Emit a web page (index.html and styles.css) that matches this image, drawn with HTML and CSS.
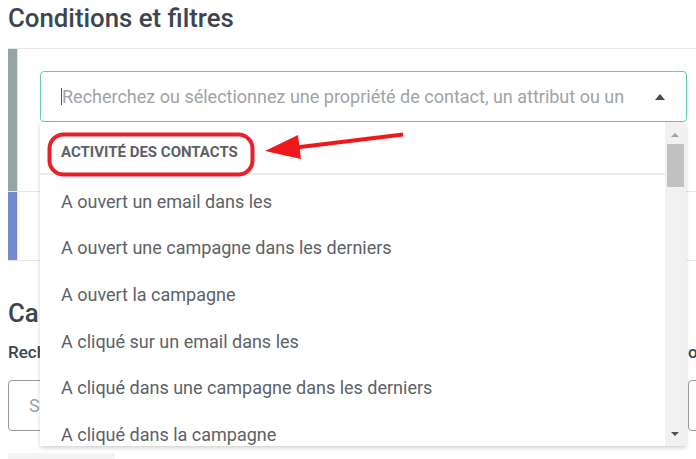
FILE: index.html
```html
<!DOCTYPE html>
<html lang="fr">
<head>
<meta charset="utf-8">
<link rel="stylesheet" href="styles.css">
</head>
<body>
<div class="page">
  <h2 class="title">Conditions et filtres</h2>
  <div class="panel">
    <div class="row row-first">
      <div class="bar bar-gray"></div>
      <div class="row-body">
        <div class="select">
          <div class="select-input">
            <span class="caret"></span>
            <span class="placeholder">Recherchez ou sélectionnez une propriété de contact, un attribut ou un</span>
            <span class="toggle"></span>
          </div>
          <div class="menu">
            <div class="menu-list">
              <div class="menu-header">ACTIVITÉ DES CONTACTS</div>
              <div class="menu-item">A ouvert un email dans les</div>
              <div class="menu-item">A ouvert une campagne dans les derniers</div>
              <div class="menu-item">A ouvert la campagne</div>
              <div class="menu-item">A cliqué sur un email dans les</div>
              <div class="menu-item">A cliqué dans une campagne dans les derniers</div>
              <div class="menu-item">A cliqué dans la campagne</div>
            </div>
            <div class="scrollbar">
              <span class="sb-up"></span>
              <span class="sb-thumb"></span>
              <span class="sb-down"></span>
            </div>
          </div>
        </div>
      </div>
    </div>
    <div class="row row-second">
      <div class="bar bar-blue"></div>
      <div class="row-body"></div>
    </div>
  </div>

  <h2 class="title section-title">Campagnes</h2>
  <div class="fields">
    <div class="field">
      <div class="label">Rechercher une campagne</div>
      <div class="box"><span class="box-ph">Sélectionnez</span></div>
    </div>
    <div class="field field-right">
      <div class="label">ou</div>
      <div class="box"></div>
    </div>
  </div>
  <div class="footer-chip"></div>

  <svg class="annot" width="696" height="459" viewBox="0 0 696 459">
    <rect x="49.5" y="134.5" width="203" height="40" rx="14" ry="14" fill="none" stroke="#e8202a" stroke-width="4"/>
    <line x1="403" y1="134.5" x2="292" y2="148" stroke="#f01818" stroke-width="4"/>
    <polygon points="265,151 298,135 301,159" fill="#f01818"/>
  </svg>
</div>
</body>
</html>
```
FILE: styles.css
```css
html, body {
  margin: 0;
  padding: 0;
  background: #ffffff;
  font-family: Roboto, "Liberation Sans", Arial, sans-serif;
  overflow: hidden;
}
.page {
  position: relative;
  width: 696px;
  height: 459px;
  padding: 0 0 0 8px;
  box-sizing: border-box;
  overflow: hidden;
}
.title {
  margin: 0;
  padding-top: 3px;
  height: 48px;
  box-sizing: border-box;
  font-size: 25.8px;
  font-weight: 500;
  color: #3b4650;
  line-height: 30px;
}
.panel {
  width: 720px;
  border-top: 1px solid #e6e6e6;
}
.row {
  display: flex;
  border-bottom: 1px solid #e6e6e6;
}
.row-first { height: 142px; }
.row-second { height: 68px; }
.bar { width: 9px; flex: none; }
.bar-gray { background: #96a5a3; }
.bar-blue { background: #7489d0; }
.row-body {
  flex: 1;
  border-left: 1px solid #e6e6e6;
  padding: 22px 0 0 22px;
}
.select {
  position: relative;
  width: 647px;
}
.select-input {
  height: 51px;
  box-sizing: border-box;
  border: 1px solid #5fcdb3;
  border-radius: 4px;
  display: flex;
  align-items: center;
  padding-left: 20px;
  position: relative;
}
.caret {
  width: 1px;
  height: 17px;
  background: #555;
}
.placeholder {
  font-size: 18px;
  color: #a0a3a8;
  white-space: nowrap;
}
.toggle {
  position: absolute;
  right: 21px;
  top: 22px;
  width: 0;
  height: 0;
  border-left: 5px solid transparent;
  border-right: 5px solid transparent;
  border-bottom: 6px solid #4d4d4d;
}
.menu {
  position: absolute;
  top: 51px;
  left: 0;
  width: 646px;
  height: 324px;
  background: #ffffff;
  display: flex;
  box-shadow: 0 2px 4px rgba(0,0,0,0.18);
  z-index: 5;
}
.menu-list {
  flex: 1;
  overflow: hidden;
}
.menu-header {
  height: 53px;
  box-sizing: border-box;
  border-bottom: 2px solid #ececec;
  display: flex;
  align-items: center;
  padding: 9px 0 0 21px;
  font-size: 15px;
  font-weight: 700;
  color: #5d6166;
}
.menu-item {
  height: 46.6px;
  display: flex;
  align-items: center;
  padding-left: 21px;
  font-size: 18px;
  color: #5d6267;
  white-space: nowrap;
}
.menu-header + .menu-item { margin-top: 3px; }
.scrollbar {
  width: 21px;
  flex: none;
  background: #f1f1f1;
  position: relative;
}
.sb-up, .sb-down {
  position: absolute;
  left: 6px;
  width: 0;
  height: 0;
  border-left: 4.5px solid transparent;
  border-right: 4.5px solid transparent;
}
.sb-up { top: 11px; border-bottom: 4px solid #a3a3a3; }
.sb-down { bottom: 10px; border-top: 4px solid #505050; }
.sb-thumb {
  position: absolute;
  left: 2px;
  top: 22px;
  width: 17px;
  height: 43px;
  background: #c1c1c1;
}
.section-title {
  margin-top: 34px;
  height: 44px;
}
.fields {
  display: flex;
  gap: 40px;
}
.field { width: 640px; flex: none; }
.label {
  font-size: 17px;
  font-weight: 500;
  color: #3b4650;
  height: 41px;
  padding-top: 3px;
  box-sizing: border-box;
  line-height: 20px;
}
.box {
  height: 51px;
  box-sizing: border-box;
  border: 1px solid #9a9a9a;
  border-radius: 4px;
  display: flex;
  align-items: center;
  padding-left: 20px;
}
.box-ph {
  font-size: 18px;
  color: #a0a3a8;
}
.footer-chip {
  margin-top: 22px;
  width: 107px;
  height: 20px;
  background: #f4f4f4;
}
.annot {
  position: absolute;
  left: 0;
  top: 0;
  z-index: 10;
  pointer-events: none;
}
```
